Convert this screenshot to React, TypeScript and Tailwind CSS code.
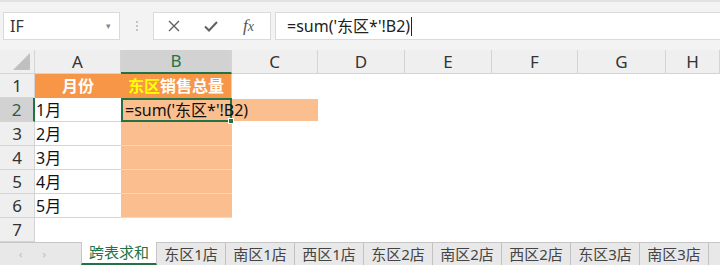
import React from "react";

const cols = ["A", "B", "C", "D", "E", "F", "G", "H"];
const months = ["1月", "2月", "3月", "4月", "5月"];
const tabs = ["东区1店", "南区1店", "西区1店", "东区2店", "南区2店", "西区2店", "东区3店", "南区3店"];

const font = { fontFamily: '"Noto Sans", "Noto Sans CJK SC", sans-serif' };

function Toolbar() {
  return (
    <div className="flex h-[50px] shrink-0 items-start border-t-2 border-[#e2e2e2] bg-[#f3f3f3] pt-[10px]">
      <div className="ml-[3px] flex h-[28px] w-[117px] items-center justify-between border border-[#dadada] bg-white pl-[6px] pr-[8px]">
        <span className="text-[16px] text-[#333]">IF</span>
        <span className="text-[9px] text-[#888]">▾</span>
      </div>
      <div className="flex h-[28px] w-[33px] flex-col items-center justify-center gap-[2px]">
        <span className="h-[2px] w-[2px] rounded-full bg-[#b5b5b5]" />
        <span className="h-[2px] w-[2px] rounded-full bg-[#b5b5b5]" />
        <span className="h-[2px] w-[2px] rounded-full bg-[#b5b5b5]" />
      </div>
      <div className="flex h-[28px] w-[118px] items-center border border-[#dadada] bg-white">
        <svg className="ml-[13px]" width="14" height="14" viewBox="0 0 14 14">
          <path d="M2 2 L12 12 M12 2 L2 12" stroke="#606060" strokeWidth="1.4" fill="none" />
        </svg>
        <svg className="ml-[22px]" width="16" height="14" viewBox="0 0 16 14">
          <path d="M2 7.5 L6 11.5 L14 3" stroke="#606060" strokeWidth="2" fill="none" />
        </svg>
        <span
          className="ml-[24px] text-[17px] italic text-[#555]"
          style={{ fontFamily: '"Liberation Serif", serif' }}
        >
          f<span className="text-[14px]">x</span>
        </span>
      </div>
      <div className="ml-[4px] flex h-[28px] flex-1 items-center border-y border-l border-[#dadada] bg-white pl-[11px]">
        <span className="text-[16px] text-[#222]">=sum('东区*'!B2)</span>
        <span className="ml-[1px] h-[19px] w-[1px] bg-[#222]" />
      </div>
    </div>
  );
}

function Grid() {
  return (
    <div className="grid shrink-0 grid-cols-[35px_86px_111px_86px_87px_87px_86px_88px_54px] grid-rows-[24px_24px_24px_24px_24px_24px_24px_24px] bg-white">
      {/* header row */}
      <div className="relative border-r border-b border-[#d4d4d4] bg-[#efefef]">
        <svg className="absolute right-[4px] bottom-[3px]" width="17" height="17" viewBox="0 0 17 17">
          <path d="M17 0 L17 17 L0 17 Z" fill="#c0c0c0" />
        </svg>
      </div>
      {cols.map((c) =>
        c === "B" ? (
          <div
            key={c}
            className="flex items-center justify-center border-r border-b-2 border-r-[#d4d4d4] border-b-[#217346] bg-[#d2d2d2] text-[17px] text-[#217346]"
          >
            {c}
          </div>
        ) : (
          <div
            key={c}
            className="flex items-center justify-center border-r border-b border-[#d4d4d4] bg-[#efefef] text-[17px] text-[#333]"
          >
            {c}
          </div>
        ),
      )}

      {/* row 1 */}
      <div className="flex items-center justify-center border-r border-b border-[#d4d4d4] bg-[#efefef] text-[17px] text-[#333]">1</div>
      <div className="flex items-center justify-center bg-[#f79646] text-[16px] font-bold text-white">月份</div>
      <div className="flex items-center justify-center border-r border-[#d4d4d4] bg-[#f79646] text-[16px] font-bold text-white">
        <span className="text-[#ffff00]">东区</span>销售总量
      </div>
      {cols.slice(2).map((c) => (
        <div key={c} />
      ))}

      {/* rows 2-6 */}
      {months.map((m, i) => {
        const row = i + 2;
        const active = row === 2;
        return (
          <React.Fragment key={m}>
            <div
              className={
                active
                  ? "flex items-center justify-center border-r-2 border-b border-r-[#217346] border-b-[#d4d4d4] bg-[#d2d2d2] text-[17px] text-[#2e5d48]"
                  : "flex items-center justify-center border-r border-b border-[#d4d4d4] bg-[#efefef] text-[17px] text-[#333]"
              }
            >
              {row}
            </div>
            <div className="flex items-center border-b border-[#f8cbad] pl-[1px] text-[16px] text-[#111]">{m}</div>
            {active ? (
              <div className="relative z-10 flex items-center overflow-visible border-2 border-[#217346] bg-[#fbbf8f] pl-[2px] text-[16px] whitespace-nowrap text-[#111]">
                =sum('东区*'!B2)
                <span className="absolute right-[-4px] bottom-[-4px] h-[6px] w-[6px] border border-white bg-[#217346]" />
              </div>
            ) : (
              <div className="border-b border-[#fcd5b4] bg-[#fbbf8f]" />
            )}
            {active ? <div className="my-[1px] bg-[#fbbf8f]" /> : <div />}
            {cols.slice(3).map((c) => (
              <div key={c} />
            ))}
          </React.Fragment>
        );
      })}

      {/* row 7 */}
      <div className="flex items-center justify-center border-r border-b border-[#d4d4d4] bg-[#efefef] text-[17px] text-[#333]">7</div>
      {cols.map((c) => (
        <div key={c} />
      ))}
    </div>
  );
}

function Tabs() {
  return (
    <div className="flex h-[23px] shrink-0 items-stretch border-t border-[#c6c6c6] bg-[#e8e8e8]">
      <div className="flex w-[81px] items-center text-[11px] text-[#bbb]">
        <span className="ml-[19px]">‹</span>
        <span className="ml-[20px]">›</span>
      </div>
      <div className="-mt-[1px] flex w-[76px] items-center justify-center border-x border-b-2 border-x-[#c6c6c6] border-b-[#217346] bg-white text-[15px] text-[#217346]">
        跨表求和
      </div>
      {tabs.map((t) => (
        <div key={t} className="flex w-[69px] shrink-0 items-center justify-center border-r border-[#c2c2c2] text-[15px] text-[#444]">
          <span className="my-[2px]">{t}</span>
        </div>
      ))}
    </div>
  );
}

export default function App() {
  return (
    <div className="flex h-[265px] w-[720px] flex-col overflow-hidden bg-white" style={font}>
      <Toolbar />
      <Grid />
      <Tabs />
    </div>
  );
}
